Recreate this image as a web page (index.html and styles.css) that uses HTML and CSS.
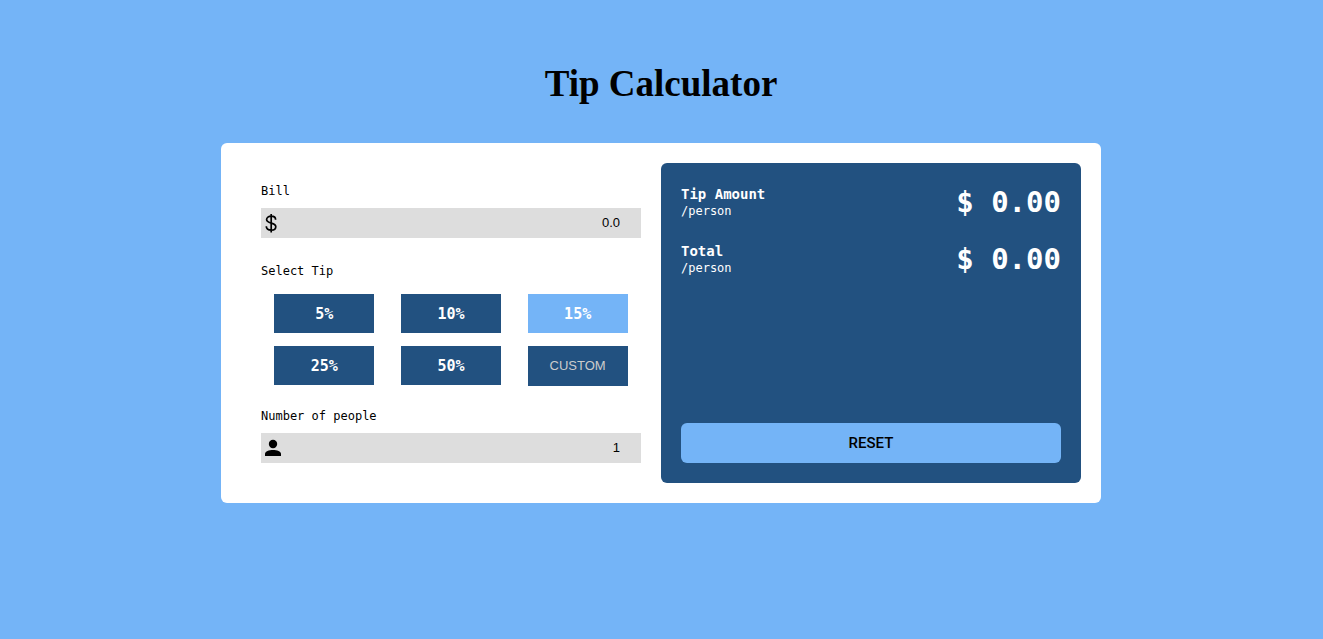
FILE: index.html
```html
<!DOCTYPE html>
<html lang="en">
<head>
<meta charset="utf-8">
<meta name="viewport" content="width=device-width, initial-scale=1">
<title>Tip Calculator</title>
<link rel="stylesheet" href="styles.css">
</head>
<body>
<h1 class="title">Tip Calculator</h1>
<main class="card">
  <form class="form">
    <label class="label" for="bill">Bill</label>
    <div class="field">
      <svg class="icon" viewBox="0 0 20 24" aria-hidden="true"><path d="M14.600 8.800C14.600 6.500 12.800 5.200 10.200 5.200S5.600 6.500 5.600 8.600C5.600 10.900 7.700 11.500 10.200 12.100C12.700 12.700 14.800 13.400 14.800 15.800C14.800 18 12.900 19.200 10.300 19.200S5.300 18 5.300 15.300M10.200 3V21.500" fill="none" stroke="#000" stroke-width="1.700"/></svg>
      <input class="input" id="bill" type="text" inputmode="decimal" value="0.0">
    </div>
    <div class="label tip-label" id="tip-label">Select Tip</div>
    <div class="tips" role="group" aria-labelledby="tip-label">
      <button class="tip" type="button">5%</button>
      <button class="tip" type="button">10%</button>
      <button class="tip active" type="button" aria-pressed="true">15%</button>
      <button class="tip" type="button">25%</button>
      <button class="tip" type="button">50%</button>
      <input class="custom" type="text" placeholder="CUSTOM" aria-label="Custom tip">
    </div>
    <label class="label" for="people">Number of people</label>
    <div class="field">
      <svg class="icon person" viewBox="0 0 24 24" aria-hidden="true"><circle cx="12" cy="8" r="4.200"/><path d="M4 20V18C4 15.300 8 14 12 14S20 15.300 20 18V20Z"/></svg>
      <input class="input" id="people" type="text" inputmode="numeric" value="1">
    </div>
  </form>
  <section class="results">
    <div class="result">
      <div><h2 class="name">Tip Amount</h2><p class="unit">/person</p></div>
      <output class="amount">$ 0.00</output>
    </div>
    <div class="result">
      <div><h2 class="name">Total</h2><p class="unit">/person</p></div>
      <output class="amount">$ 0.00</output>
    </div>
    <button class="reset" type="button">RESET</button>
  </section>
</main>
</body>
</html>
```

FILE: styles.css
```css
* { box-sizing: border-box; }
body {
  min-height: 100vh;
  margin: 0;
  padding: 64px 21px 20px 20px;
  background: #74b4f7;
  color: #000;
  font-family: "DejaVu Sans Mono", monospace;
}
.title {
  margin: 0 0 39px;
  font: bold 37px/40px "Liberation Serif", serif;
  text-align: center;
}
.card {
  display: grid;
  grid-template-columns: 1fr 1fr;
  max-width: 880px;
  margin: 0 auto;
  padding: 20px;
  border-radius: 6px;
  background: #fff;
}
.form { padding: 20px; }
.label { display: block; margin-bottom: 9px; font-size: 12px; line-height: 16px; }
.field {
  display: flex;
  align-items: center;
  height: 30px;
  margin-bottom: 25px;
  background: #ddd;
}
.form .field:last-child { margin-bottom: 0; }
.icon { flex: none; width: 20px; height: 24px; }
.person { width: 24px; }
.input {
  flex: 1;
  min-width: 0;
  height: 30px;
  padding: 0 21px 2px 0;
  border: 0;
  background: none;
  font: 13px "Liberation Sans", sans-serif;
  text-align: right;
}
.tip-label { margin-bottom: 15px; }
.tips {
  display: grid;
  grid-template-columns: repeat(3, 1fr);
  row-gap: 13px;
  justify-items: center;
  align-items: start;
  margin-bottom: 22px;
}
.tip, .custom {
  width: 100px;
  max-width: 90%;
  height: 39px;
  padding: 0;
  border: 0;
  border-radius: 0;
  background: #225180;
  color: #fff;
  font: bold 15px "DejaVu Sans Mono", monospace;
  text-align: center;
}
.tip.active { background: #74b4f7; }
.custom { height: 40px; padding-bottom: 2px; font: 13px "Liberation Sans", sans-serif; }
.custom::placeholder { color: #ccc; opacity: 1; }
.results {
  display: flex;
  flex-direction: column;
  padding: 20px;
  border-radius: 6px;
  background: #225180;
  color: #fff;
}
.result {
  display: flex;
  justify-content: space-between;
  align-items: center;
  height: 37px;
  margin-bottom: 20px;
}
.name { margin: 0; padding-top: 2px; font-size: 14px; line-height: 17px; }
.unit { margin: 0; font-size: 12px; line-height: 16px; }
.amount { font-size: 29px; font-weight: bold; line-height: 36px; }
.reset {
  height: 40px;
  margin-top: auto;
  border: 0;
  border-radius: 6px;
  background: #74b4f7;
  color: #000;
  font: 500 15px Roboto, sans-serif;
}
```
